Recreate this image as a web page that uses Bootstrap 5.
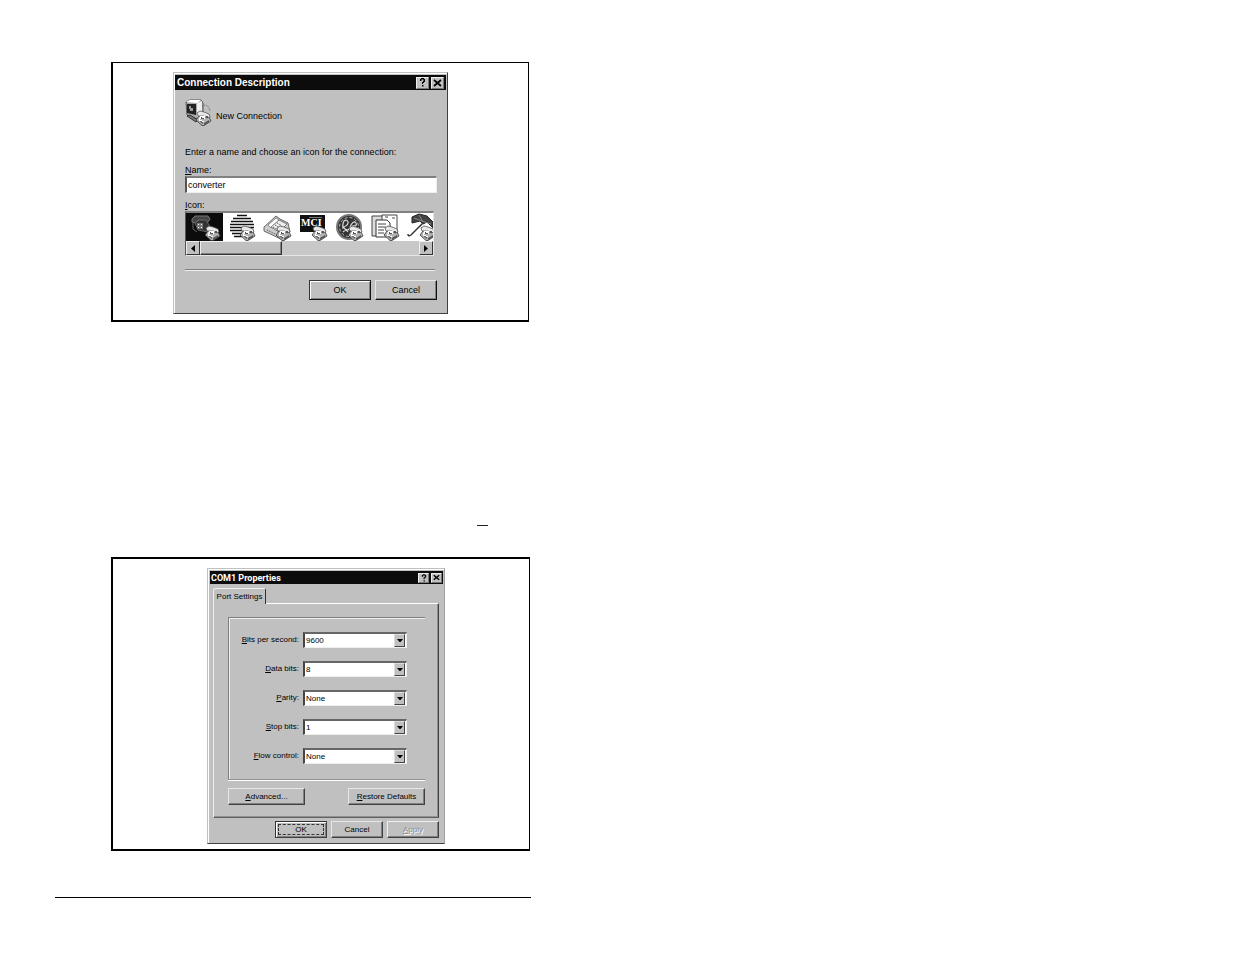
<!DOCTYPE html>
<html lang="en">
<head>
<meta charset="utf-8">
<meta name="viewport" content="width=device-width, initial-scale=1">
<title>Connection setup</title>
<link href="https://cdn.jsdelivr.net/npm/bootstrap@5.3.0/dist/css/bootstrap.min.css" rel="stylesheet">
<style>
body{background:#fff;color:#000;font-family:"Liberation Sans",Arial,sans-serif;font-size:9px;line-height:12px}
.sheet{width:43%;padding:62px 0 0 55px}
.figure-frame{border:2px solid #000;border-width:1px 1px 2px 2px;margin-left:56px;margin-right:2px}
.figure-frame.lower{border-top-width:2px;margin-right:1px;padding:9px 0 5px}
.figure-frame.upper{padding:9px 0 6px}
.win{background:#c0c0c0;border:1px solid #c0c0c0;border-right:1px solid #404040;border-bottom:1px solid #404040;box-shadow:inset 1px 1px #fff}
.win-conn{width:275px;padding:2px 1px 13px 1px;margin-left:60px}
.win-com{width:238px;padding:2px 1px 5px 2px;margin-left:94px;border-right-color:#a0a0a0}
.titlebar{background:#0c0c0c;color:#fff;font-weight:700;font-size:10px;height:15px;padding:0 2px 0 2px;gap:2px}
.win-com .titlebar{height:13px;font-size:9px;font-family:Roboto,sans-serif;padding:0 1px}
.cap{width:13px;height:12px;padding:0;border:1px solid;border-color:#eee #777 #777 #eee;background:#c0c0c0;color:#000;display:flex;align-items:center;justify-content:center;border-radius:0}
.win-com .cap{width:11px;height:10px}
.cap svg{display:block}
.btn-win{--bs-btn-font-size:9px;--bs-btn-line-height:12px;--bs-btn-padding-x:0;--bs-btn-padding-y:0;--bs-btn-border-radius:0;--bs-btn-color:#000;--bs-btn-bg:#c0c0c0;--bs-btn-hover-bg:#ccc;border:1px solid;border-color:#e6e6e6 #111 #111 #e6e6e6;box-shadow:inset -1px -1px #808080;background:#c0c0c0;width:62px;height:20px}
.btn-win.main{border-color:#333 #111 #111 #333;box-shadow:inset 1px 1px #fff,inset -1px -1px #808080}
.win-com .btn-win{--bs-btn-font-size:8px;width:52px;height:17px;border-right-color:#404040;border-bottom-color:#404040}
.win-com .btn-win.wide{width:77px}
.win-com .btn-win.faded{color:#909090;text-shadow:1px 1px #fff;opacity:1;border-color:#eee #404040 #404040 #eee;background:#c0c0c0}
.focus-box{border:1px dashed #333;height:11px;line-height:9px;margin:0 2px;display:block}
.body-conn{padding:0 9px 0 10px}
.intro{padding-top:9px}
.intro span{margin-top:6px}
.prompt{margin:19px 0 6px}
.icon-label{margin-top:6px}
.field{border:1px solid #eee;border-top:2px solid #808080;border-left:2px solid #555;border-radius:0;background:#fff;font-size:9px;line-height:12px;height:17px;padding:0 1px;color:#000}
.strip{border:1px solid #e6e6e6;border-top:2px solid #808080;border-left:1px solid #555;background:#c0c0c0;width:249px}
.icons{background:#fff;height:28px}
.icons button{border:0;padding:0;background:#fff;flex:0 0 37px;margin-right:-1px}
.icons button:first-child{background:#0c0c0c;margin-right:0}
.icons svg{display:block}
.sb{height:14px;background:#c8c8c8}
.sb button,.thumb{background:#c0c0c0;border:1px solid;border-color:#eee #333 #333 #eee;padding:0;width:14px;height:14px}
.thumb{width:82px;box-shadow:inset -1px -1px #808080}
.sb svg,.drop svg{display:block;margin:auto}
.groove{border-top:1px solid #808080;border-bottom:1px solid #eee;margin:13px 2px 9px 0}
.tab-page{border:1px solid;border-color:#fff #404040 #606060 #eee;box-shadow:inset -1px -1px #909090;margin:0 4px 3px 3px;padding:13px 13px 12px 14px}
.win-tab{border:1px solid #eee;border-right:1px solid #333;border-bottom:0;border-radius:3px 2px 0 0;background:#c0c0c0;width:53px;height:16px;margin:4px 0 -1px 3px;padding:0;position:relative;z-index:1;font-size:8px;line-height:14px;text-align:center;color:#000}
.group-box{border:1px solid #808080;border-right:0;border-bottom-color:#909090;box-shadow:inset 1px 1px #eee,0 1px #fff;padding:14px 18px 15px 0;margin-bottom:8px}
.com-row{gap:4px;font-size:8px;margin-bottom:13px}
.com-row:last-child{margin-bottom:0}
.combo{position:relative;width:104px}
.combo select{appearance:none;display:block;width:100%;height:16px;border:1px solid #eee;border-top:2px solid #666;border-left:2px solid #444;background:#fff;padding:0 1px;font-size:8px;line-height:12px;color:#000;border-radius:0}
.drop{position:absolute;right:2px;top:2px;width:11px;height:13px;border:1px solid;border-color:#ddd #444 #444 #ddd;background:#c0c0c0;display:flex;pointer-events:none}
.actions{margin-right:4px}
.dash{width:11px;height:1px;background:#222;margin:203px 43px 31px auto}
.foot-rule{height:1px;background:#000;margin-top:46px}
</style>
</head>
<body>
<svg width="0" height="0" class="position-absolute" aria-hidden="true">
<defs>
<g id="mini">
<path d="M0 10 3 6 13 7 15 11 8 15.500 6 15.500z" fill="#b4b4b4" stroke="#333" stroke-width=".8"/>
<path d="M1 3 4 1 8 2 13 4 14 7 11 8 8 6 4 6 2 6z" fill="#e8e8e8" stroke="#555" stroke-width=".8"/>
<path d="M4 6h5v3H3z" fill="#fff"/><path d="M5 7h1v1h2v1H5zm-3 3 5 2v2zM8 13l5-3v2l-5 3zM10 6h2v2h-2z" fill="#555"/>
<path d="M3 9h1v1h2v1h2v1H6v-1H3z" fill="#fff"/>
</g>
<path id="down" d="M0 0h6L3.500 3h-1z"/>
</defs>
</svg>
<main class="sheet">
<section class="figure-frame upper">
<div class="win win-conn">
<header class="titlebar d-flex align-items-center">
<span class="me-auto">Connection Description</span>
<button class="cap" aria-label="Help"><svg width="7" height="9" viewBox="0 0 7 9"><path d="M1 1h1V0h3v1h1v3H5v1H4v1H3V4h1V3h.5V1.500H2.500V3H1zM3 7h1.500v1.500H3z"/></svg></button>
<button class="cap" aria-label="Close"><svg width="9" height="8" viewBox="0 0 9 8"><path d="M1 1l7 6M8 1 1 7" stroke="#000" stroke-width="1.700"/></svg></button>
</header>
<div class="body-conn">
<div class="intro d-flex align-items-center gap-1">
<svg width="27" height="28" viewBox="0 0 27 28"><path d="M1 3 5 1 16 1 18 4 18 15 12 20 2 16z" fill="#aaa" stroke="#555"/><path d="M1 3 5 1 16 1 12 4z" fill="#fff"/><path d="M12 4 17 2v12l-5 4z" fill="#eee"/><path d="M2 5h9v11l-9-2z" fill="#222"/><path d="M4 7h2v2h2v3H5v-2H4z" fill="#999"/><path d="M2 17l3-1 8 5-2 2z" fill="#777" stroke="#333"/><path d="M17 7q6-3 8 5" fill="none" stroke="#555" stroke-dasharray="1 1"/><use href="#mini" x="11" y="11"/></svg>
<span>New Connection</span>
</div>
<p class="prompt">Enter a name and choose an icon for the connection:</p>
<label for="name" class="d-block"><u>N</u>ame:</label>
<input id="name" class="field w-100 d-block" value="converter">
<div id="iconlabel" class="icon-label"><u>I</u>con:</div>
<div class="strip" role="group" aria-labelledby="iconlabel">
<div class="icons d-flex overflow-hidden">
<button aria-label="Telephone"><svg width="37" height="28" viewBox="0 0 37 28"><path d="M6 6 9 3 22 3 24 6 22 9 18 8 12 7 10 10 6 9z" fill="#444" stroke="#777"/><path d="M9 10 13 7h7l3 5-1 7-10-2z" fill="#333" stroke="#666"/><path d="M11 10h6v6h-6z" fill="#777"/><path d="M12 11h1v1h-1zm3 0h1v1h-1zm-3 3h1v1h-1zm3 0h1v1h-1z" fill="#eee"/><path d="M7 10v6l4 3" fill="none" stroke="#666"/><use href="#mini" x="19" y="12"/></svg></button>
<button aria-label="Globe"><svg width="37" height="28" viewBox="0 0 37 28"><path d="M14 2.500h10M10 5.500h18M8 8.500h22M7 11.500h24M7 14.500h24M7 17.500h14M9 20.500h11M11 23.500h9" stroke="#111" stroke-width="1.500"/><use href="#mini" x="17" y="12"/></svg></button>
<button aria-label="Fax"><svg width="37" height="28" viewBox="0 0 37 28"><path d="M5 14 17 3 21 6 29 10 31 19 24 27 5 18z" fill="#ccc" stroke="#666"/><path d="M9 12 17 5 20 7 12 15z" fill="#fff" stroke="#888"/><path d="M12 14 20 7 28 11 20 19z" fill="#eee" stroke="#777"/><path d="M14 14l5 3M16 12l5 3M18 10l5 3M8 17l8 4" stroke="#444" stroke-dasharray="1 1"/><use href="#mini" x="17" y="12"/></svg></button>
<button aria-label="MCI"><svg width="37" height="28" viewBox="0 0 37 28"><path d="M5 2h25v17H5z" fill="#111"/><path d="M14 4.500h13" stroke="#777"/><text x="6" y="13" font-family="Liberation Serif,serif" font-weight="700" font-size="10" fill="#fff">MCI</text><use href="#mini" x="17" y="12"/></svg></button>
<button aria-label="GE"><svg width="37" height="28" viewBox="0 0 37 28"><circle cx="18" cy="14" r="12" fill="#333" stroke="#777" stroke-width="2"/><circle cx="18" cy="14" r="9.500" fill="none" stroke="#bbb" stroke-dasharray="3 2"/><path d="M11 15q7-3 6-6t-4-1q-3 5 1 8t6-4q3-5 5-2t-4 3q4 0 4 3M12 19q3-3 5 0" fill="none" stroke="#ddd" stroke-width="1.200"/><use href="#mini" x="17" y="12"/></svg></button>
<button aria-label="Documents"><svg width="37" height="28" viewBox="0 0 37 28"><path d="M5 3h13v20H5z" fill="#ddd" stroke="#444"/><path d="M15 2h15v19H15z" fill="#fff" stroke="#444"/><path d="M9 7h11l3 3v14H9z" fill="#fff" stroke="#333"/><path d="M25 5h3M18 4h3M11 11h8M11 14h8M11 17h6M11 20h6" stroke="#444"/><use href="#mini" x="17" y="12"/></svg></button>
<button aria-label="Umbrella"><svg width="37" height="28" viewBox="0 0 37 28"><path d="M9 4 16 1 24 3 30 9 30 15 24 9 20 11 17 8 9 10z" fill="#444" stroke="#222"/><path d="M11 5l8 3 9 3M16 2l4 7" stroke="#888" fill="none"/><path d="M20 10 8 22q-3 2-3-1" fill="none" stroke="#333" stroke-width="1.500"/><use href="#mini" x="17" y="12"/></svg></button>
</div>
<div class="sb d-flex">
<button aria-label="Scroll left"><svg width="4" height="7"><path d="M4 0v7L0 3.500z"/></svg></button>
<span class="thumb me-auto"></span>
<button aria-label="Scroll right"><svg width="4" height="7"><path d="M0 0v7l4-3.500z"/></svg></button>
</div>
</div>
<div class="groove"></div>
<div class="d-flex justify-content-end gap-1"><button class="btn btn-win main">OK</button><button class="btn btn-win">Cancel</button></div>
</div>
</div>
</section>
<div class="dash"></div>
<section class="figure-frame lower">
<div class="win win-com">
<header class="titlebar d-flex align-items-center">
<span class="me-auto">COM1 Properties</span>
<button class="cap" aria-label="Help"><svg width="6" height="8" viewBox="0 0 7 9"><path d="M1 1h1V0h3v1h1v3H5v1H4v1H3V4h1V3h.5V1.500H2.500V3H1zM3 7h1.500v1.500H3z"/></svg></button>
<button class="cap" aria-label="Close"><svg width="7" height="7" viewBox="0 0 9 8"><path d="M1 1l7 6M8 1 1 7" stroke="#000" stroke-width="1.800"/></svg></button>
</header>
<button class="win-tab d-block" role="tab" aria-selected="true">Port Settings</button>
<div class="tab-page">
<div class="group-box">
<div class="com-row d-flex align-items-center justify-content-end"><label for="bps"><u>B</u>its per second:</label><div class="combo"><select id="bps"><option>9600</option></select><span class="drop"><svg width="6" height="3"><use href="#down"/></svg></span></div></div>
<div class="com-row d-flex align-items-center justify-content-end"><label for="dbits"><u>D</u>ata bits:</label><div class="combo"><select id="dbits"><option>8</option></select><span class="drop"><svg width="6" height="3"><use href="#down"/></svg></span></div></div>
<div class="com-row d-flex align-items-center justify-content-end"><label for="par"><u>P</u>arity:</label><div class="combo"><select id="par"><option>None</option></select><span class="drop"><svg width="6" height="3"><use href="#down"/></svg></span></div></div>
<div class="com-row d-flex align-items-center justify-content-end"><label for="sbits"><u>S</u>top bits:</label><div class="combo"><select id="sbits"><option>1</option></select><span class="drop"><svg width="6" height="3"><use href="#down"/></svg></span></div></div>
<div class="com-row d-flex align-items-center justify-content-end"><label for="flow"><u>F</u>low control:</label><div class="combo"><select id="flow"><option>None</option></select><span class="drop"><svg width="6" height="3"><use href="#down"/></svg></span></div></div>
</div>
<div class="d-flex justify-content-between"><button class="btn btn-win wide"><u>A</u>dvanced...</button><button class="btn btn-win wide"><u>R</u>estore Defaults</button></div>
</div>
<div class="actions d-flex justify-content-end gap-1"><button class="btn btn-win main"><span class="focus-box">OK</span></button><button class="btn btn-win">Cancel</button><button class="btn btn-win faded" disabled><u>A</u>pply</button></div>
</div>
</section>
<div class="foot-rule"></div>
</main>
<script src="https://cdn.jsdelivr.net/npm/bootstrap@5.3.0/dist/js/bootstrap.bundle.min.js"></script>
</body>
</html>
